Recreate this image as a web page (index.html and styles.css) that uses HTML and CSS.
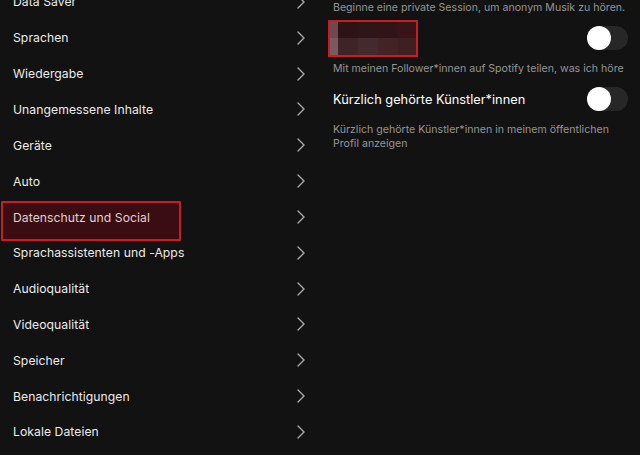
FILE: index.html
```html
<!DOCTYPE html>
<html lang="de">
<head>
<meta charset="utf-8">
<link rel="stylesheet" href="styles.css">
</head>
<body>
<div class="app">
  <nav class="menu">
    <ul class="list">
      <li class="item"><span>Data Saver</span><svg class="chev" viewBox="0 0 8 14"><path d="M1 1 L7 7 L1 13"/></svg></li>
      <li class="item"><span>Sprachen</span><svg class="chev" viewBox="0 0 8 14"><path d="M1 1 L7 7 L1 13"/></svg></li>
      <li class="item"><span>Wiedergabe</span><svg class="chev" viewBox="0 0 8 14"><path d="M1 1 L7 7 L1 13"/></svg></li>
      <li class="item"><span>Unangemessene Inhalte</span><svg class="chev" viewBox="0 0 8 14"><path d="M1 1 L7 7 L1 13"/></svg></li>
      <li class="item"><span>Geräte</span><svg class="chev" viewBox="0 0 8 14"><path d="M1 1 L7 7 L1 13"/></svg></li>
      <li class="item"><span>Auto</span><svg class="chev" viewBox="0 0 8 14"><path d="M1 1 L7 7 L1 13"/></svg></li>
      <li class="item active"><span class="mark"></span><span class="label">Datenschutz und Social</span><svg class="chev" viewBox="0 0 8 14"><path d="M1 1 L7 7 L1 13"/></svg></li>
      <li class="item"><span>Sprachassistenten und -Apps</span><svg class="chev" viewBox="0 0 8 14"><path d="M1 1 L7 7 L1 13"/></svg></li>
      <li class="item"><span>Audioqualität</span><svg class="chev" viewBox="0 0 8 14"><path d="M1 1 L7 7 L1 13"/></svg></li>
      <li class="item"><span>Videoqualität</span><svg class="chev" viewBox="0 0 8 14"><path d="M1 1 L7 7 L1 13"/></svg></li>
      <li class="item"><span>Speicher</span><svg class="chev" viewBox="0 0 8 14"><path d="M1 1 L7 7 L1 13"/></svg></li>
      <li class="item"><span>Benachrichtigungen</span><svg class="chev" viewBox="0 0 8 14"><path d="M1 1 L7 7 L1 13"/></svg></li>
      <li class="item"><span>Lokale Dateien</span><svg class="chev" viewBox="0 0 8 14"><path d="M1 1 L7 7 L1 13"/></svg></li>
    </ul>
  </nav>
  <section class="detail">
    <p class="desc first">Beginne eine private Session, um anonym Musik zu hören.</p>
    <div class="row blurred-row">
      <div class="blur">
        <span class="px a"></span><span class="px b"></span><span class="px c"></span><span class="px d"></span><span class="px e"></span>
        <span class="px f"></span><span class="px g"></span><span class="px h"></span><span class="px i"></span><span class="px j"></span>
      </div>
      <span class="toggle"><span class="knob"></span></span>
    </div>
    <p class="desc">Mit meinen Follower*innen auf Spotify teilen, was ich höre</p>
    <div class="row plain-row">
      <span class="title">Kürzlich gehörte Künstler*innen</span>
      <span class="toggle"><span class="knob"></span></span>
    </div>
    <p class="desc multi">Kürzlich gehörte Künstler*innen in meinem öffentlichen<br>Profil anzeigen</p>
  </section>
</div>
</body>
</html>
```
FILE: styles.css
```css
* { box-sizing: border-box; }
html, body {
  margin: 0;
  padding: 0;
  background: #121212;
  height: 100%;
  overflow: hidden;
}
body {
  font-family: Inter, "Noto Sans", "Liberation Sans", sans-serif;
  color: #ffffff;
}
.app {
  display: flex;
  width: 640px;
  height: 455px;
}
.menu {
  width: 320px;
  flex: none;
}
.list {
  list-style: none;
  margin: -16px 0 0 0;
  padding: 0;
}
.item {
  position: relative;
  height: 35.83px;
  display: flex;
  align-items: center;
  justify-content: space-between;
  padding: 0 15px 0 13px;
  font-size: 12.2px;
  color: #ececec;
  letter-spacing: 0.05px;
}
.item .label { position: relative; top: 1px; }
.chev {
  width: 8px;
  height: 14px;
  fill: none;
  stroke: #a9a9a9;
  stroke-width: 1.4;
  stroke-linecap: round;
  stroke-linejoin: round;
}
.mark {
  position: absolute;
  left: 1px;
  top: 2px;
  width: 180px;
  height: 40px;
  border: 2px solid #c81d28;
  background: #3a0d12;
  border-radius: 1px;
}
.active .label { color: #e3cfd1; }
.detail {
  flex: 1;
  padding: 1px 12px 0 13px;
}
.desc {
  margin: 0;
  font-size: 10.6px;
  line-height: 14px;
  color: #959595;
}
.row {
  display: flex;
  align-items: center;
  justify-content: space-between;
}
.blurred-row {
  height: 38px;
  margin: 4px 0 5px -5px;
}
.blur {
  width: 90px;
  height: 37px;
  border: 2px solid #c81d28;
  display: grid;
  grid-template-columns: 8px 20px 20px 20px 18px;
  grid-template-rows: 1fr 1fr;
  overflow: hidden;
}
.px.a { background: #6e4a4e; }
.px.b { background: #2e1216; }
.px.c { background: #2f1518; }
.px.d { background: #311417; }
.px.e { background: #361417; }
.px.f { background: #7a5a5e; }
.px.g { background: #3f2427; }
.px.h { background: #452a2d; }
.px.i { background: #422427; }
.px.j { background: #3e2023; }
.toggle {
  width: 41px;
  height: 24px;
  border-radius: 12px;
  background: #272727;
  display: flex;
  align-items: center;
}
.knob {
  width: 24px;
  height: 24px;
  border-radius: 50%;
  background: #ffffff;
}
.plain-row {
  height: 34px;
  margin: 6px 0 7px 0;
}
.plain-row .title {
  font-size: 12.8px;
  color: #ffffff;
}
```
